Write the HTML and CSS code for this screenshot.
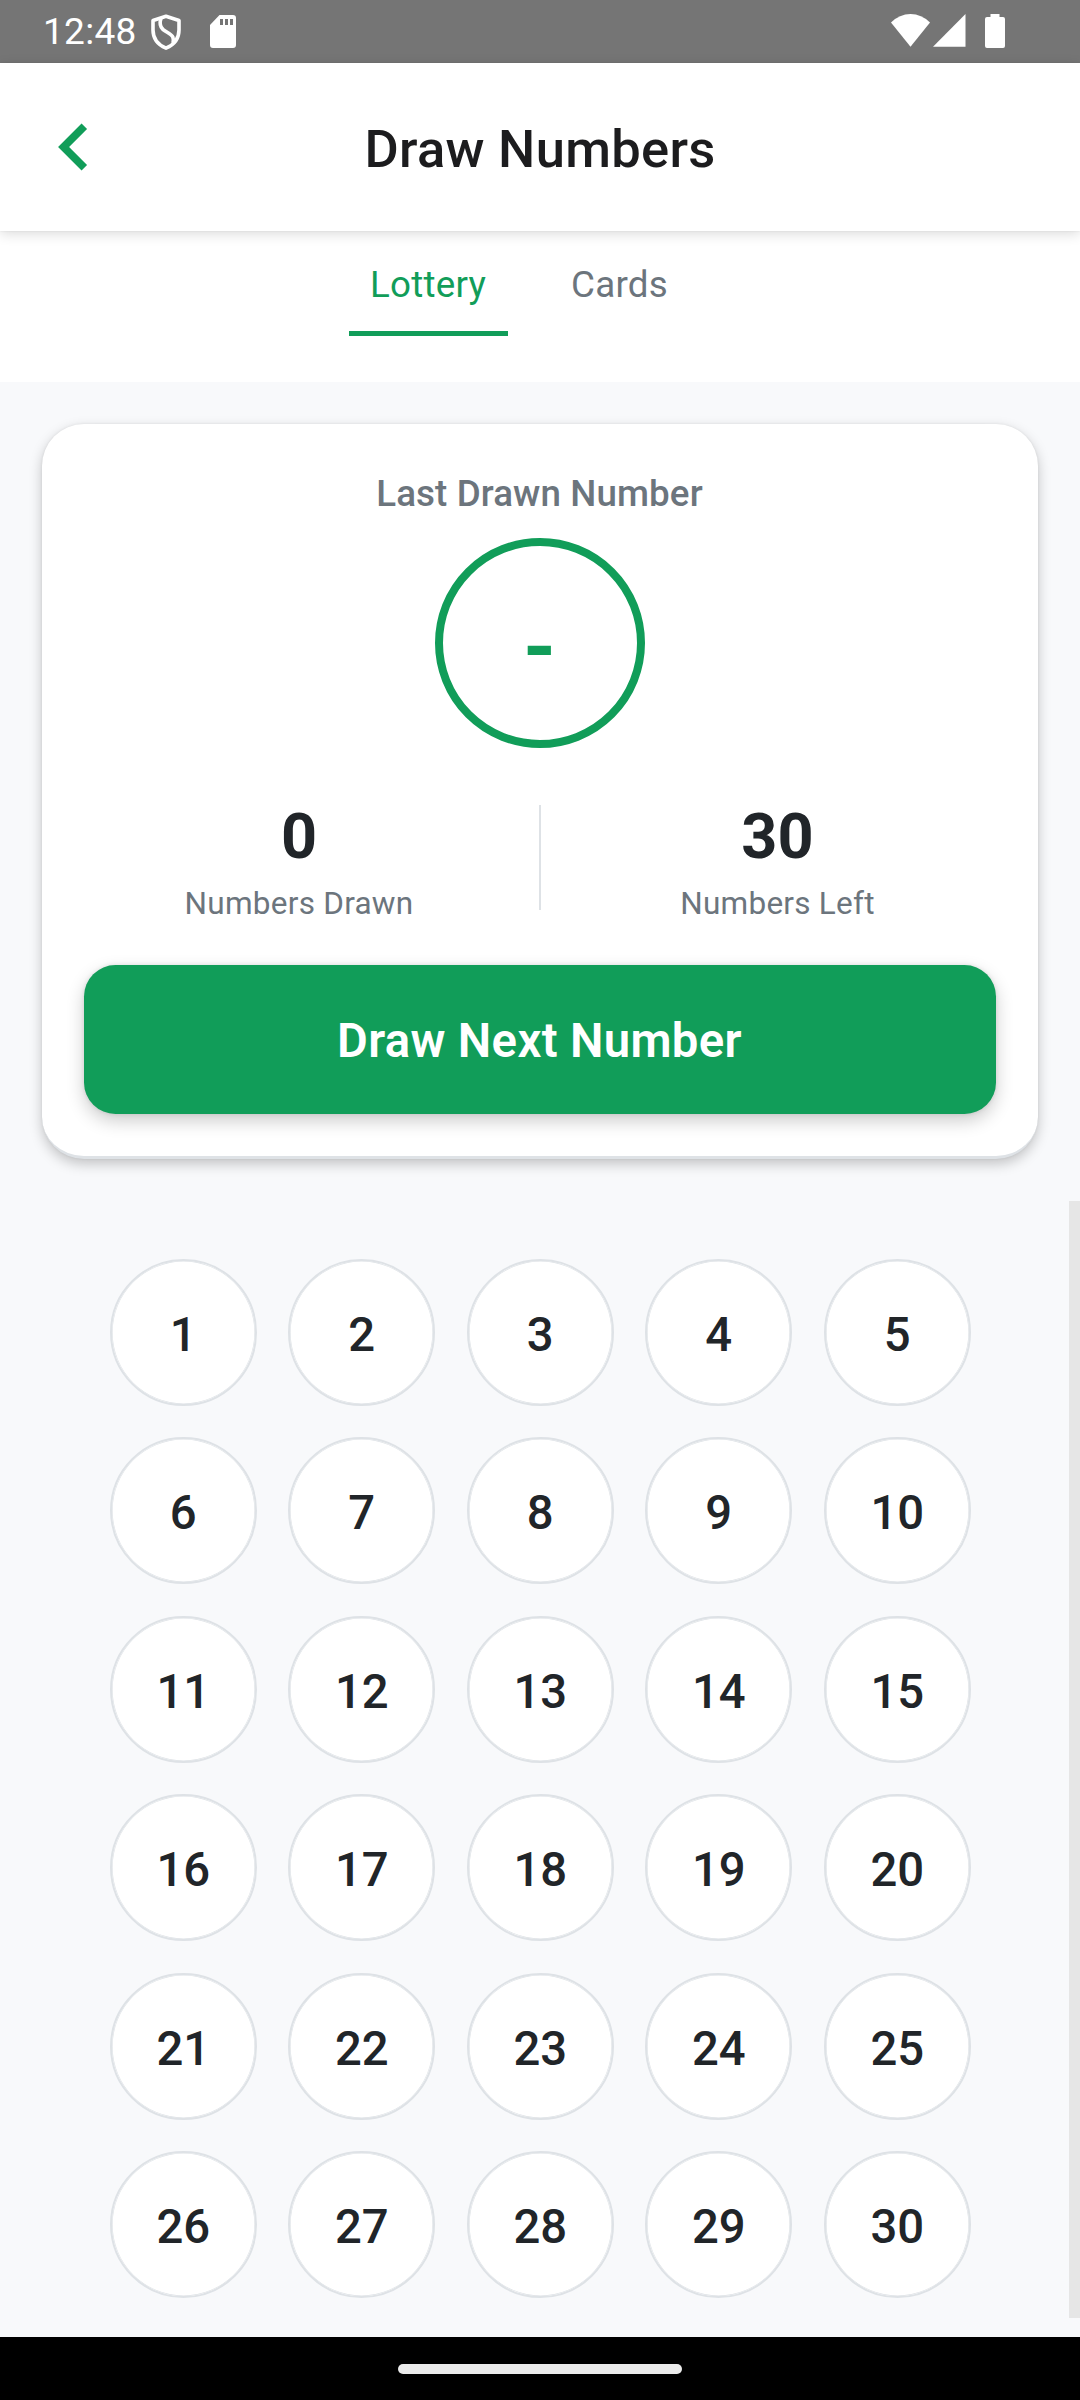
FILE: index.html
```html
<!DOCTYPE html>
<html lang="en">
<head>
<meta charset="utf-8">
<title>Draw Numbers</title>
<link rel="stylesheet" href="styles.css">
</head>
<body>
<div class="screen">
  <div class="status-bar">
    <span class="clock">12:48</span>
    <svg class="icon-shield" width="32" height="38" viewBox="0 0 32 38" fill="none" stroke="#fff" stroke-width="3.6" stroke-linejoin="round"><path d="M16 3.200 L29 7.500 V17 C29 26 23.500 32 16 35.200 C8.500 32 3 26 3 17 V7.500 Z"/><path d="M11 5 C9.500 10 10 14 13 16.500 C17 19.500 21.500 21 22.800 24 C23.800 26.500 23.500 28 23 30"/></svg>
    <svg class="icon-sd" width="26" height="33" viewBox="0 0 26 33"><path fill="#fff" fill-rule="evenodd" d="M9.500 0 H23 Q26 0 26 3 V30 Q26 33 23 33 H3 Q0 33 0 30 V10 Z M10 4 V10 H13 V4 Z M15 4 V10 H18 V4 Z M20 4 V10 H23 V4 Z"/></svg>
    <div class="system-icons">
      <svg width="39" height="33" viewBox="0 0 39 33"><path fill="#fff" d="M0 8.500 Q8.500 0 19.500 0 Q30.500 0 39 8.500 L19.500 32.700 Z"/></svg>
      <svg class="icon-signal" width="33" height="33" viewBox="0 0 33 33"><path fill="#fff" d="M32.500 0 V32.700 H0 Z"/></svg>
      <svg class="icon-battery" width="20" height="34" viewBox="0 0 20 34"><path fill="#fff" d="M5.500 0 H14.500 V3 H18 Q20 3 20 5 V32 Q20 34 18 34 H2 Q0 34 0 32 V5 Q0 3 2 3 H5.500 Z"/></svg>
    </div>
  </div>

  <header class="header">
    <svg class="back" width="30" height="48" viewBox="0 0 30 48" fill="none" stroke="#119d59" stroke-width="7.800"><path d="M26.300 3.300 L5.600 24 L26.300 44.700"/></svg>
    <h1 class="title text">Draw Numbers</h1>
  </header>

  <nav class="tabs">
    <div class="tab tab-active"><span class="text">Lottery</span></div>
    <div class="tab"><span class="text">Cards</span></div>
  </nav>

  <section class="card">
    <div class="card-label text">Last Drawn Number</div>
    <div class="last-number"><span class="text">-</span></div>
    <div class="stats">
      <div class="stat"><span class="stat-value text">0</span><span class="stat-label text">Numbers Drawn</span></div>
      <div class="divider"></div>
      <div class="stat"><span class="stat-value text">30</span><span class="stat-label text">Numbers Left</span></div>
    </div>
    <div class="draw-button"><span class="text">Draw Next Number</span></div>
  </section>

  <main class="board">
    <div class="numbers">
      <div class="number"><span class="text">1</span></div>
      <div class="number"><span class="text">2</span></div>
      <div class="number"><span class="text">3</span></div>
      <div class="number"><span class="text">4</span></div>
      <div class="number"><span class="text">5</span></div>
      <div class="number"><span class="text">6</span></div>
      <div class="number"><span class="text">7</span></div>
      <div class="number"><span class="text">8</span></div>
      <div class="number"><span class="text">9</span></div>
      <div class="number"><span class="text">10</span></div>
      <div class="number"><span class="text">11</span></div>
      <div class="number"><span class="text">12</span></div>
      <div class="number"><span class="text">13</span></div>
      <div class="number"><span class="text">14</span></div>
      <div class="number"><span class="text">15</span></div>
      <div class="number"><span class="text">16</span></div>
      <div class="number"><span class="text">17</span></div>
      <div class="number"><span class="text">18</span></div>
      <div class="number"><span class="text">19</span></div>
      <div class="number"><span class="text">20</span></div>
      <div class="number"><span class="text">21</span></div>
      <div class="number"><span class="text">22</span></div>
      <div class="number"><span class="text">23</span></div>
      <div class="number"><span class="text">24</span></div>
      <div class="number"><span class="text">25</span></div>
      <div class="number"><span class="text">26</span></div>
      <div class="number"><span class="text">27</span></div>
      <div class="number"><span class="text">28</span></div>
      <div class="number"><span class="text">29</span></div>
      <div class="number"><span class="text">30</span></div>
    </div>
    <div class="scrollbar"></div>
  </main>

  <footer class="nav-bar"><div class="home-pill"></div></footer>
</div>
</body>
</html>
```
FILE: styles.css
```css
* { box-sizing: border-box; }

body {
  margin: 0;
  font-family: Roboto, "Liberation Sans", sans-serif;
  color: #212529;
}

.screen {
  width: 1080px;
  height: 2400px;
  overflow: hidden;
  display: flex;
  flex-direction: column;
  background: #f8f9fb;
}

/* Line box with the extra top padding that Android gives its text */
.text {
  display: block;
  padding-top: 0.093em;
  line-height: 1.226;
  white-space: nowrap;
}

.status-bar {
  flex: none;
  height: 63px;
  padding: 0 75px 0 43px;
  display: flex;
  align-items: center;
  background: #757575;
  color: #fff;
}
.clock { width: 92px; font-size: 37px; line-height: 60px; letter-spacing: 0.3px; }
.icon-shield { margin-left: 14.5px; }
.icon-sd { margin-left: 28.5px; }
.system-icons { height: 35px; margin-left: auto; display: flex; align-items: flex-start; }
.icon-signal { margin-left: 3px; }
.icon-battery { margin-left: 19px; }

.header {
  flex: none;
  position: relative;
  z-index: 1;
  height: 168px;
  padding: 0 58px;
  display: grid;
  grid-template-columns: 30px 1fr 30px;
  align-items: center;
  background: #fff;
  box-shadow: 0 3px 12px rgba(0, 0, 0, 0.14), 0 0 2px rgba(0, 0, 0, 0.08);
}
.title {
  margin: 0;
  text-align: center;
  font-size: 52.5px;
  font-weight: 500;
  letter-spacing: 0.3px;
  color: #1c1c1e;
}

.tabs {
  flex: none;
  height: 151px;
  padding: 28px 0 46px 349px;
  display: flex;
  gap: 42px;
  background: #fff;
}
.tab {
  padding: 0 21px;
  font-size: 36.75px;
  letter-spacing: 0.25px;
  color: #6c757d;
  border-bottom: 5px solid transparent;
}
.tab-active { width: 159px; color: #119d59; border-bottom-color: #119d59; }

.card {
  flex: none;
  margin: 42px 42px 0;
  height: 735px;
  padding: 44px 42px 0;
  border-radius: 42px;
  border-bottom: 3px solid #dee2e6;
  background: #fff;
  box-shadow: 0 5px 13px rgba(0, 0, 0, 0.22), 0 0 3px rgba(0, 0, 0, 0.07);
}
.card-label {
  padding-right: 1px;
  text-align: center;
  font-size: 36.75px;
  font-weight: 500;
  letter-spacing: 0.1px;
  color: #6c757d;
}
.last-number {
  width: 210px;
  height: 210px;
  margin: 21.5px auto 0;
  padding: 3px 1px 0 0;
  display: flex;
  align-items: center;
  justify-content: center;
  border: 8px solid #119d59;
  border-radius: 50%;
  font-size: 84px;
  font-weight: 700;
  color: #119d59;
}
.stats {
  margin: 43px -21px 0 -23px;
  display: grid;
  grid-template-columns: 1fr 4px 1fr;
  align-items: center;
  justify-items: center;
}
.stat { padding-top: 1px; display: flex; flex-direction: column; align-items: center; }
.stat:last-child { padding-right: 3px; }
.stat-value { font-size: 63px; font-weight: 700; }
.stat-label { margin-top: 7.5px; font-size: 31.5px; letter-spacing: 0.25px; color: #6c757d; }
.divider { width: 2px; height: 105px; margin-left: 2px; background: #dee2e6; }
.draw-button {
  height: 149px;
  margin-top: 41px;
  padding: 1px 1px 0 0;
  display: flex;
  align-items: center;
  justify-content: center;
  border-radius: 31.5px;
  background: #119d59;
  box-shadow: 0 7px 18px rgba(0, 0, 0, 0.2), 0 0 4px rgba(0, 0, 0, 0.1);
  font-size: 47.25px;
  font-weight: 600;
  letter-spacing: 0.35px;
  color: #fff;
}

.board {
  flex: 1;
  margin-top: 42px;
  padding-bottom: 19px;
  display: grid;
  grid-template-columns: 109.75px 1fr 11px;
}
.numbers {
  grid-column: 2;
  padding-top: 57.75px;
  display: grid;
  grid-template-columns: repeat(5, 147px);
  grid-auto-rows: 147px;
  gap: 31.5px;
  align-content: start;
}
.number {
  padding-top: 2.5px;
  display: flex;
  align-items: center;
  justify-content: center;
  border: 2px solid #dee2e6;
  border-radius: 50%;
  background: #fff;
  box-shadow: inset 0 0 0 0.6px #dee2e6;
  font-size: 47.25px;
  font-weight: 500;
}
.scrollbar { background: #e6e6e6; }

.nav-bar {
  flex: none;
  height: 63px;
  padding-top: 27px;
  background: #000;
}
.home-pill {
  width: 284px;
  height: 10px;
  margin: 0 auto;
  border-radius: 5px;
  background: #ebebeb;
}
```
